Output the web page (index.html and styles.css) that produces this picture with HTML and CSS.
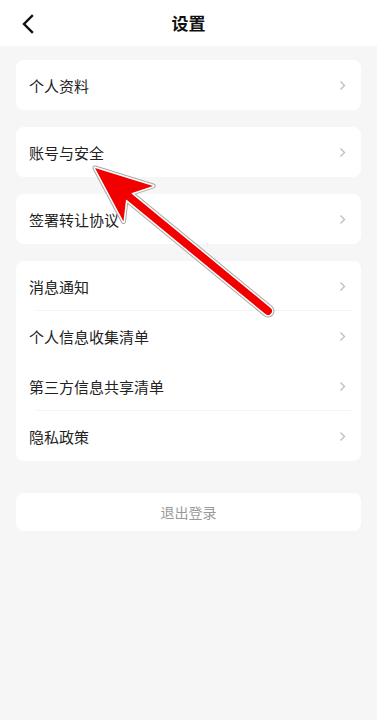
FILE: index.html
```html
<!DOCTYPE html>
<html lang="zh">
<head>
<meta charset="utf-8">
<title>设置</title>
<link rel="stylesheet" href="styles.css">
</head>
<body>
<div class="page">
  <header class="topbar">
    <svg class="back" width="14" height="20" viewBox="0 0 14 20"><path d="M11 2 L3 10 L11 18" fill="none" stroke="#111" stroke-width="2.4" stroke-linecap="square"/></svg>
    <h1 class="title">设置</h1>
  </header>
  <main class="content">
    <section class="card">
      <div class="row"><span>个人资料</span><svg class="chev" width="7" height="11" viewBox="0 0 7 11"><path d="M1.5 1.5 L5.5 5.5 L1.5 9.5" fill="none" stroke="#bdbdbd" stroke-width="1.3"/></svg></div>
    </section>
    <section class="card">
      <div class="row"><span>账号与安全</span><svg class="chev" width="7" height="11" viewBox="0 0 7 11"><path d="M1.5 1.5 L5.5 5.5 L1.5 9.5" fill="none" stroke="#bdbdbd" stroke-width="1.3"/></svg></div>
    </section>
    <section class="card">
      <div class="row"><span>签署转让协议</span><svg class="chev" width="7" height="11" viewBox="0 0 7 11"><path d="M1.5 1.5 L5.5 5.5 L1.5 9.5" fill="none" stroke="#bdbdbd" stroke-width="1.3"/></svg></div>
    </section>
    <section class="card">
      <div class="row sep"><span>消息通知</span><svg class="chev" width="7" height="11" viewBox="0 0 7 11"><path d="M1.5 1.5 L5.5 5.5 L1.5 9.5" fill="none" stroke="#bdbdbd" stroke-width="1.3"/></svg></div>
      <div class="row"><span>个人信息收集清单</span><svg class="chev" width="7" height="11" viewBox="0 0 7 11"><path d="M1.5 1.5 L5.5 5.5 L1.5 9.5" fill="none" stroke="#bdbdbd" stroke-width="1.3"/></svg></div>
      <div class="row sep"><span>第三方信息共享清单</span><svg class="chev" width="7" height="11" viewBox="0 0 7 11"><path d="M1.5 1.5 L5.5 5.5 L1.5 9.5" fill="none" stroke="#bdbdbd" stroke-width="1.3"/></svg></div>
      <div class="row"><span>隐私政策</span><svg class="chev" width="7" height="11" viewBox="0 0 7 11"><path d="M1.5 1.5 L5.5 5.5 L1.5 9.5" fill="none" stroke="#bdbdbd" stroke-width="1.3"/></svg></div>
    </section>
    <button class="logout">退出登录</button>
  </main>
  <svg class="pointer" width="377" height="720" viewBox="0 0 377 720">
    <g stroke-linejoin="round" stroke-linecap="round">
      <line x1="127" y1="195" x2="268" y2="311" stroke="#a8a8a8" stroke-width="13"/>
      <polygon points="95,168 153,186 132,193 126,200 123.5,221.5" fill="#a8a8a8" stroke="#a8a8a8" stroke-width="5"/>
      <line x1="127" y1="195" x2="268" y2="311" stroke="#ffffff" stroke-width="11"/>
      <polygon points="95,168 153,186 132,193 126,200 123.5,221.5" fill="#fff" stroke="#fff" stroke-width="3"/>
      <line x1="127" y1="195" x2="268" y2="311" stroke="#f20000" stroke-width="8"/>
      <polygon points="95,168 153,186 132,193 126,200 123.5,221.5" fill="#f20000"/>
    </g>
  </svg>
</div>
</body>
</html>
```

FILE: styles.css
```css
* { box-sizing: border-box; }
html, body { margin: 0; padding: 0; }
body {
  background: #f6f6f6;
  font-family: "Noto Sans CJK SC", "Noto Sans", sans-serif;
  color: #222;
}
.page {
  position: relative;
  width: 377px;
  min-height: 720px;
  background: #f6f6f6;
}
.topbar {
  height: 46px;
  background: #fff;
  display: flex;
  align-items: center;
  justify-content: center;
  position: relative;
}
.back {
  position: absolute;
  left: 21px;
  top: 14px;
}
.title {
  margin: 0;
  font-size: 17px;
  font-weight: 600;
  color: #111;
  line-height: 1;
  margin-top: -1px;
}
.content {
  display: flex;
  flex-direction: column;
  gap: 17px;
  padding: 14px 16px 0;
}
.card {
  background: #fff;
  border-radius: 8px;
  display: flex;
  flex-direction: column;
}
.row {
  height: 50px;
  display: flex;
  align-items: center;
  justify-content: space-between;
  padding: 0 15px 0 13px;
  font-size: 15px;
  color: #222;
  position: relative;
}
.row span { line-height: 1; }
.row.sep::after {
  content: "";
  position: absolute;
  left: 20px;
  right: 10px;
  bottom: 0;
  height: 1px;
  background: #f3f3f3;
}
.chev { display: block; }
.logout {
  margin-top: 15px;
  height: 38px;
  border: none;
  background: #fff;
  border-radius: 8px;
  font-family: "Noto Sans CJK SC", sans-serif;
  font-size: 14px;
  color: #9a9a9a;
}
.pointer {
  position: absolute;
  left: 0;
  top: 0;
  pointer-events: none;
}
```
